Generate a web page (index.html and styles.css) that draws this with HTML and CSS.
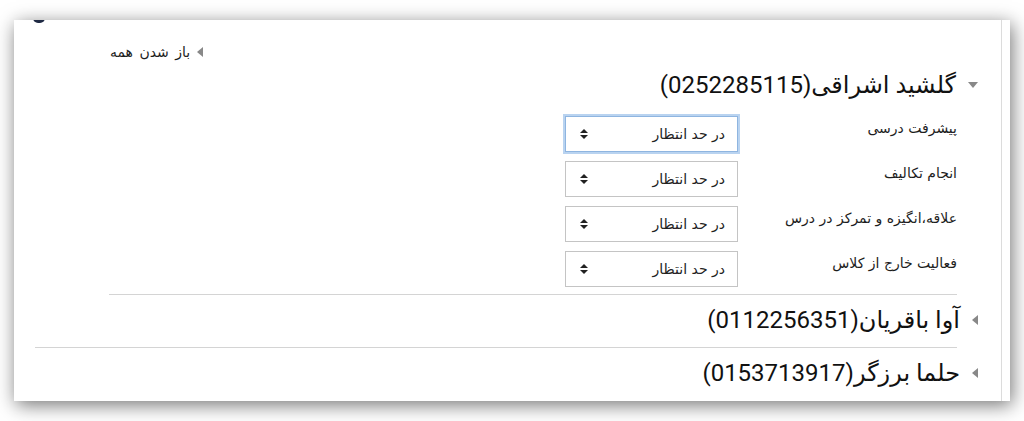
FILE: index.html
```html
<!DOCTYPE html>
<html lang="fa" dir="rtl">
<head>
<meta charset="utf-8">
<link rel="stylesheet" href="styles.css">
</head>
<body>
<div class="panel">
  <span class="top-icon"></span>
  <div class="inner">
    <div class="expand-row">
      <a class="expand-all"><span class="caret-left"></span>باز شدن همه</a>
    </div>

    <section class="student open first">
      <h3 class="legend"><span class="caret-down"></span>گلشید اشراقی(0252285115)</h3>
      <div class="rows">
        <div class="row">
          <label class="lbl">پیشرفت درسی</label>
          <div class="sel focus"><span class="sel-text">در حد انتظار</span><span class="updown"></span></div>
        </div>
        <div class="row">
          <label class="lbl">انجام تکالیف</label>
          <div class="sel"><span class="sel-text">در حد انتظار</span><span class="updown"></span></div>
        </div>
        <div class="row">
          <label class="lbl">علاقه،انگیزه و تمرکز در درس</label>
          <div class="sel"><span class="sel-text">در حد انتظار</span><span class="updown"></span></div>
        </div>
        <div class="row">
          <label class="lbl">فعالیت خارج از کلاس</label>
          <div class="sel"><span class="sel-text">در حد انتظار</span><span class="updown"></span></div>
        </div>
      </div>
    </section>

    <section class="student closed second">
      <h3 class="legend"><span class="caret-left big"></span>آوا باقریان(0112256351)</h3>
    </section>

    <section class="student closed last">
      <h3 class="legend"><span class="caret-left big"></span>حلما برزگر(0153713917)</h3>
    </section>
  </div>
</div>
</body>
</html>
```

FILE: styles.css
```css
html, body {
  margin: 0;
  padding: 0;
  background: #ffffff;
}
body {
  padding: 20px 14px 20px 14px;
  height: 421px;
  box-sizing: border-box;
  overflow: hidden;
  font-family: "DejaVu Sans", Tahoma, sans-serif;
  color: #1d1d1d;
}
.panel {
  position: relative;
  height: 381px;
  background: #fff;
  box-shadow: 2px 4px 18px rgba(0, 0, 0, 0.55);
  overflow: hidden;
}
.top-icon {
  position: absolute;
  left: 19px;
  top: -3px;
  width: 12px;
  height: 6px;
  background: #1f2a44;
  border-radius: 0 0 5px 5px;
}
.inner {
  height: 100%;
  margin-right: 8px;
  border-right: 1px solid #dcdcdc;
  padding: 0 44px 0 21px;
  box-sizing: border-box;
}
.expand-row {
  display: flex;
  justify-content: flex-end;
  padding-top: 24px;
  padding-left: 75px;
  height: 16px;
}
.expand-all {
  display: flex;
  align-items: center;
  gap: 7px;
  font-size: 14px;
  word-spacing: 2px;
  color: #1d1d1d;
  line-height: 16px;
}
.caret-left {
  display: inline-block;
  width: 0;
  height: 0;
  border-top: 5px solid transparent;
  border-bottom: 5px solid transparent;
  border-right: 6px solid #888;
  border-left: 0;
}
.caret-left.big {
  border-top-width: 5px;
  border-bottom-width: 5px;
  border-right-width: 6px;
}
.caret-down {
  display: inline-block;
  width: 0;
  height: 0;
  border-left: 5px solid transparent;
  border-right: 5px solid transparent;
  border-top: 6px solid #888;
}
.legend {
  margin: 0;
  display: flex;
  align-items: center;
  gap: 12px;
  margin-right: -21px;
  font-family: Roboto, "DejaVu Sans", sans-serif;
  font-weight: normal;
  font-size: 24px;
  line-height: 30px;
  color: #111;
}
.student.first {
  margin-left: 74px;
  border-bottom: 1px solid #d4d4d4;
  padding-top: 10px;
  padding-bottom: 7px;
}
.student.second {
  border-bottom: 1px solid #d4d4d4;
  padding-top: 10px;
  padding-bottom: 12px;
}
.student.last {
  padding-top: 10px;
}
.rows {
  display: flex;
  flex-direction: column;
  gap: 9px;
  padding-top: 16px;
}
.row {
  display: grid;
  grid-template-columns: 219px 173px;
  align-items: start;
}
.lbl {
  font-size: 14px;
  line-height: 18px;
  padding-top: 3px;
  color: #1d1d1d;
}
.sel {
  height: 36px;
  box-sizing: border-box;
  border: 1px solid #c4c4c4;
  display: flex;
  align-items: center;
  justify-content: space-between;
  padding: 0 12px 0 14px;
  background: #fff;
}
.sel.focus {
  border: 1px solid #8fb5e0;
  box-shadow: 0 0 0 2px #b9d3f0;
}
.sel-text {
  font-size: 14px;
  color: #222;
}
.updown {
  position: relative;
  width: 8px;
  height: 10px;
}
.updown::before,
.updown::after {
  content: "";
  position: absolute;
  left: 0;
  border-left: 4px solid transparent;
  border-right: 4px solid transparent;
}
.updown::before {
  top: 0;
  border-bottom: 4px solid #222;
}
.updown::after {
  bottom: 0;
  border-top: 4px solid #222;
}
```
